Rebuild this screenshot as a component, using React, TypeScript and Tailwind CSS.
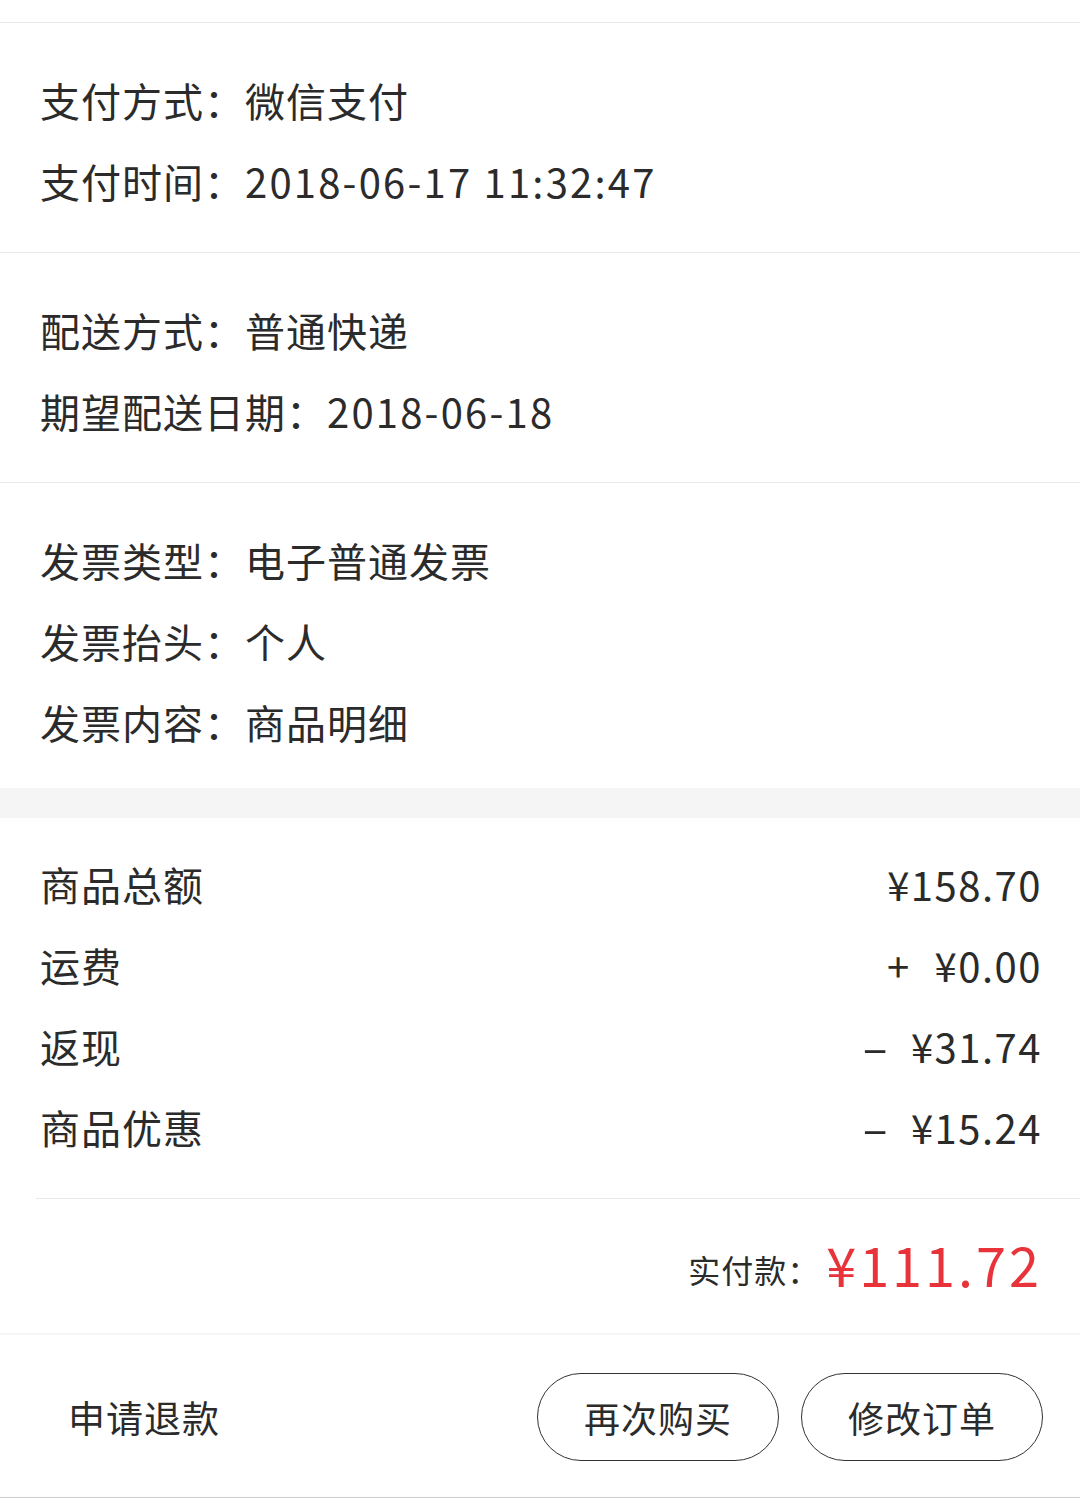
const font = { fontFamily: '"Noto Sans CJK SC", "Noto Sans", sans-serif' };

function InfoRow({ label, value }: { label: string; value: string }) {
	const numeric = /\d/.test(value);
	return (
		<div className="h-[81px] flex items-center text-[40px] tracking-[1px] text-[#2b2b2b]">
			<span>{label}：</span>
			<span className={numeric ? 'tracking-[2.2px]' : ''}>{value}</span>
		</div>
	);
}

function InfoSection({
	rows,
	last,
}: {
	rows: { label: string; value: string }[];
	last?: boolean;
}) {
	return (
		<div
			className={`px-[40px] pt-[36px] ${last ? 'pb-[26px]' : 'pb-[31px] border-b border-[#e8e8e8]'}`}
		>
			{rows.map((r) => (
				<InfoRow key={r.label} label={r.label} value={r.value} />
			))}
		</div>
	);
}

function PriceRow({ label, sign, value }: { label: string; sign?: string; value: string }) {
	return (
		<div className="h-[81px] flex items-center justify-between text-[40px] text-[#2b2b2b]">
			<span className="tracking-[1px]">{label}</span>
			<span className="flex items-center tracking-[1.5px]">
				{sign === '+' && <span className="mr-[24px]">+</span>}
				{sign === '-' && <span className="mr-[26px] ml-[4px] scale-x-[2]">-</span>}
				<span>{value}</span>
			</span>
		</div>
	);
}

export default function App() {
	return (
		<div className="w-full bg-white" style={font}>
			<div className="h-[23px] border-b border-[#e8e8e8]" />

			<InfoSection
				rows={[
					{ label: '支付方式', value: '微信支付' },
					{ label: '支付时间', value: '2018-06-17 11:32:47' },
				]}
			/>
			<InfoSection
				rows={[
					{ label: '配送方式', value: '普通快递' },
					{ label: '期望配送日期', value: '2018-06-18' },
				]}
			/>
			<InfoSection
				last
				rows={[
					{ label: '发票类型', value: '电子普通发票' },
					{ label: '发票抬头', value: '个人' },
					{ label: '发票内容', value: '商品明细' },
				]}
			/>

			<div className="h-[30px] bg-[#f5f5f5]" />

			<div className="pl-[40px] pr-[38px] pt-[25px] pb-[31px]">
				<PriceRow label="商品总额" value="¥158.70" />
				<PriceRow label="运费" sign="+" value="¥0.00" />
				<PriceRow label="返现" sign="-" value="¥31.74" />
				<PriceRow label="商品优惠" sign="-" value="¥15.24" />
			</div>

			<div className="ml-[36px] pr-[38px] h-[135px] border-t border-[#e8e8e8] flex items-center justify-end">
				<span className="text-[32px] text-[#2b2b2b] mt-[6px] tracking-[1px]">实付款：</span>
				<span className="ml-[6px] text-[54px] text-[#e8333a] tracking-[3px] -mt-[6px]">
					¥111.72
				</span>
			</div>

			<div className="h-[165px] border-t-2 border-[#f6f6f6] border-b border-b-[#cccccc] flex items-center justify-between pl-[68px] pr-[37px]">
				<span className="text-[37px] text-[#2b2b2b] tracking-[1px] mt-[4px]">申请退款</span>
				<div className="flex gap-[22px] mt-[2px]">
					<button className="w-[242px] h-[88px] rounded-[44px] border-[1.5px] border-[#333333] text-[36px] text-[#2b2b2b] tracking-[1px] flex items-center justify-center">
						再次购买
					</button>
					<button className="w-[242px] h-[88px] rounded-[44px] border-[1.5px] border-[#333333] text-[36px] text-[#2b2b2b] tracking-[1px] flex items-center justify-center">
						修改订单
					</button>
				</div>
			</div>
		</div>
	);
}
